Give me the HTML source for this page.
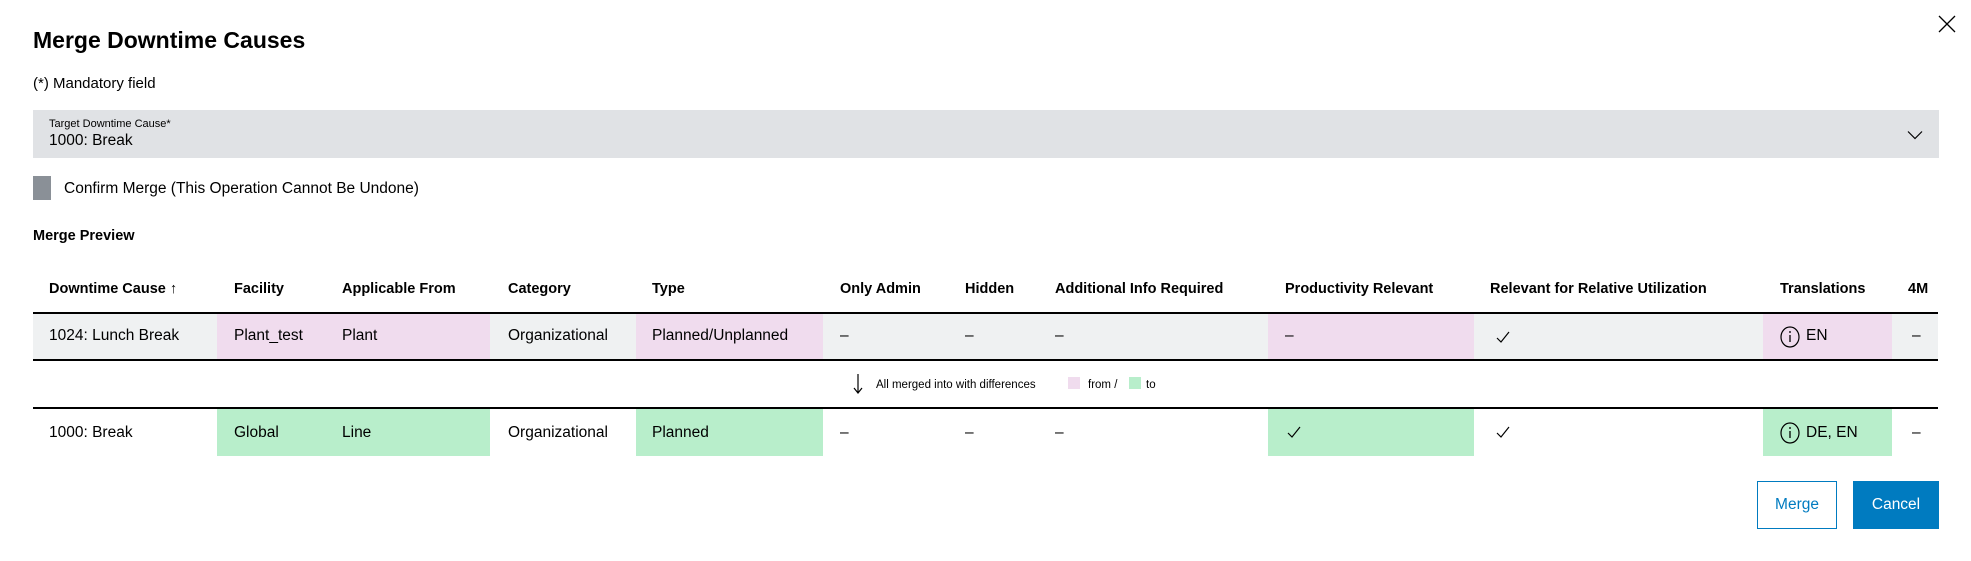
<!DOCTYPE html>
<html><head><meta charset="utf-8"><style>
*{margin:0;padding:0;box-sizing:border-box}
body{width:1971px;height:561px;background:#fff;font-family:"Liberation Sans",sans-serif;color:#000;position:relative;overflow:hidden}
.a{position:absolute;white-space:nowrap}
.h{font-weight:bold;font-size:14.5px;top:281px}
.c{font-size:15.5px;}
.bg{position:absolute}
.pk{background:#f0dcee}.gr{background:#b8eecb}
</style></head><body>
<div class="a" style="left:33px;top:27px;font-size:23px;font-weight:bold">Merge Downtime Causes</div>
<svg class="a" style="left:1938px;top:15px" width="18" height="18" viewBox="0 0 18 18"><path d="M1 1L17 17M17 1L1 17" stroke="#000" stroke-width="1.3"/></svg>
<div class="a" style="left:33px;top:75px;font-size:15px">(*) Mandatory field</div>
<div class="bg" style="left:33px;top:110px;width:1906px;height:48px;background:#e0e2e5"></div>
<div class="a" style="left:49px;top:118px;font-size:11px">Target Downtime Cause*</div>
<div class="a" style="left:49px;top:132px;font-size:15.5px">1000: Break</div>
<svg class="a" style="left:1906px;top:130px" width="18" height="10" viewBox="0 0 18 10"><path d="M2 1.5L9 8.5L16 1.5" fill="none" stroke="#000" stroke-width="1.2"/></svg>
<div class="bg" style="left:33px;top:176px;width:18px;height:24px;background:#8a9097"></div>
<div class="a" style="left:64px;top:180px;font-size:15.5px">Confirm Merge (This Operation Cannot Be Undone)</div>
<div class="a" style="left:33px;top:228px;font-size:14.5px;font-weight:bold">Merge Preview</div>

<div class="a h" style="left:49px">Downtime Cause ↑</div>
<div class="a h" style="left:234px">Facility</div>
<div class="a h" style="left:342px">Applicable From</div>
<div class="a h" style="left:508px">Category</div>
<div class="a h" style="left:652px">Type</div>
<div class="a h" style="left:840px">Only Admin</div>
<div class="a h" style="left:965px">Hidden</div>
<div class="a h" style="left:1055px">Additional Info Required</div>
<div class="a h" style="left:1285px">Productivity Relevant</div>
<div class="a h" style="left:1490px">Relevant for Relative Utilization</div>
<div class="a h" style="left:1780px">Translations</div>
<div class="a h" style="left:1908px">4M</div>

<div class="bg" style="left:33px;top:313px;width:1905px;height:47px;background:#eff1f2"></div>
<div class="bg pk" style="left:217px;top:313px;width:273px;height:47px"></div>
<div class="bg pk" style="left:636px;top:313px;width:187px;height:47px"></div>
<div class="bg pk" style="left:1268px;top:313px;width:206px;height:47px"></div>
<div class="bg pk" style="left:1763px;top:313px;width:129px;height:47px"></div>
<div class="bg" style="left:33px;top:312px;width:1905px;height:2px;background:#000"></div>
<div class="bg" style="left:33px;top:359px;width:1905px;height:2px;background:#000"></div>
<div class="bg" style="left:33px;top:407px;width:1905px;height:2px;background:#000"></div>
<div class="bg gr" style="left:217px;top:409px;width:273px;height:47px"></div>
<div class="bg gr" style="left:636px;top:409px;width:187px;height:47px"></div>
<div class="bg gr" style="left:1268px;top:409px;width:206px;height:47px"></div>
<div class="bg gr" style="left:1763px;top:409px;width:129px;height:47px"></div>

<div class="a c" style="left:49px;top:327px">1024: Lunch Break</div>
<div class="a c" style="left:234px;top:327px">Plant_test</div>
<div class="a c" style="left:342px;top:327px">Plant</div>
<div class="a c" style="left:508px;top:327px">Organizational</div>
<div class="a c" style="left:652px;top:327px">Planned/Unplanned</div>
<div class="a c" style="left:840px;top:327px">–</div>
<div class="a c" style="left:965px;top:327px">–</div>
<div class="a c" style="left:1055px;top:327px">–</div>
<div class="a c" style="left:1285px;top:327px">–</div>
<svg class="a" style="left:1496px;top:330px" width="14" height="14" viewBox="0 0 14 14"><path d="M1 8L5 12L13 2" fill="none" stroke="#000" stroke-width="1.2"/></svg>
<svg class="a" style="left:1780px;top:326px" width="20" height="22" viewBox="0 0 20 22"><ellipse cx="10" cy="11" rx="9" ry="10" fill="none" stroke="#000" stroke-width="1.2"/><path d="M10 9V16M10 5V7" stroke="#000" stroke-width="1.3"/></svg>
<div class="a c" style="left:1806px;top:327px">EN</div>
<div class="a c" style="left:1912px;top:327px">–</div>

<svg class="a" style="left:853px;top:373px" width="10" height="22" viewBox="0 0 10 22"><path d="M5 1V20M1 15L5 20L9 15" fill="none" stroke="#000" stroke-width="1.2"/></svg>
<div class="a" style="left:876px;top:379px;font-size:11.5px">All merged into with differences</div>
<div class="bg pk" style="left:1068px;top:377px;width:12px;height:12px"></div>
<div class="a" style="left:1088px;top:379px;font-size:11.5px">from /</div>
<div class="bg gr" style="left:1129px;top:377px;width:12px;height:12px"></div>
<div class="a" style="left:1146px;top:379px;font-size:11.5px">to</div>

<div class="a c" style="left:49px;top:424px">1000: Break</div>
<div class="a c" style="left:234px;top:424px">Global</div>
<div class="a c" style="left:342px;top:424px">Line</div>
<div class="a c" style="left:508px;top:424px">Organizational</div>
<div class="a c" style="left:652px;top:424px">Planned</div>
<div class="a c" style="left:840px;top:424px">–</div>
<div class="a c" style="left:965px;top:424px">–</div>
<div class="a c" style="left:1055px;top:424px">–</div>
<svg class="a" style="left:1287px;top:425px" width="14" height="14" viewBox="0 0 14 14"><path d="M1 8L5 12L13 2" fill="none" stroke="#000" stroke-width="1.2"/></svg>
<svg class="a" style="left:1496px;top:425px" width="14" height="14" viewBox="0 0 14 14"><path d="M1 8L5 12L13 2" fill="none" stroke="#000" stroke-width="1.2"/></svg>
<svg class="a" style="left:1780px;top:422px" width="20" height="22" viewBox="0 0 20 22"><ellipse cx="10" cy="11" rx="9" ry="10" fill="none" stroke="#000" stroke-width="1.2"/><path d="M10 9V16M10 5V7" stroke="#000" stroke-width="1.3"/></svg>
<div class="a c" style="left:1806px;top:424px">DE, EN</div>
<div class="a c" style="left:1912px;top:424px">–</div>

<div class="a" style="left:1757px;top:481px;width:80px;height:48px;border:1.5px solid #007bc0;color:#007bc0;font-size:15.5px;text-align:center;line-height:45px">Merge</div>
<div class="a" style="left:1853px;top:481px;width:86px;height:48px;background:#007bc0;color:#fff;font-size:15.5px;text-align:center;line-height:48px">Cancel</div>
</body></html>
